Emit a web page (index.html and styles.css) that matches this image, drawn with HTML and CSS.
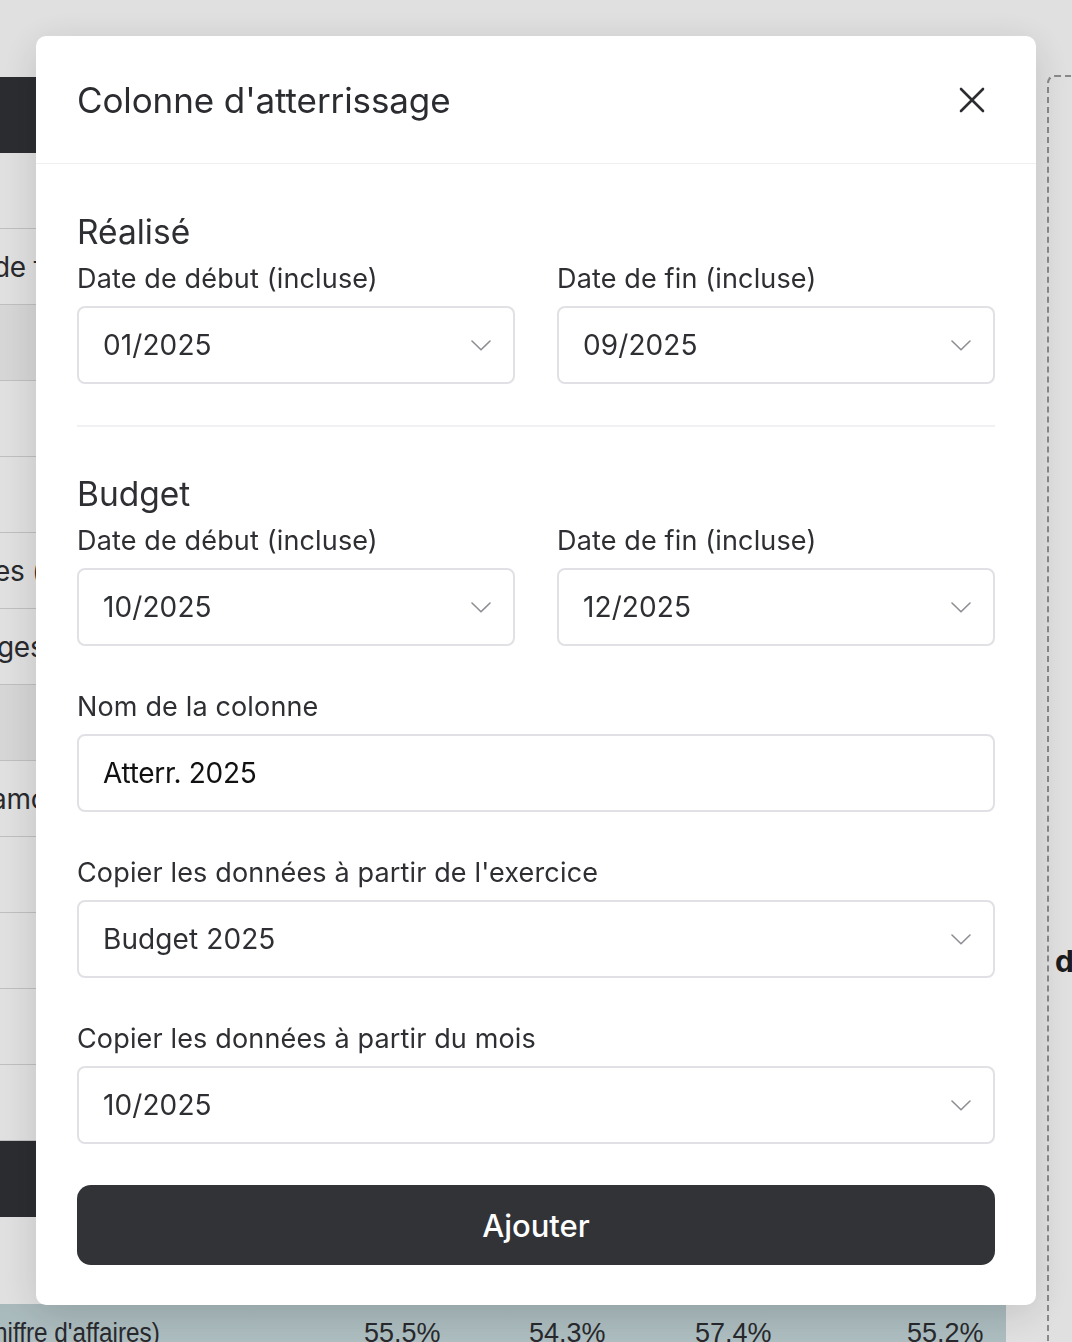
FILE: index.html
```html
<!DOCTYPE html>
<html lang="fr">
<head>
<meta charset="utf-8">
<title>Colonne d'atterrissage</title>
<link rel="stylesheet" href="styles.css">
</head>
<body>
<div class="app">
  <div class="table">
    <div class="row row-dark"></div>
    <div class="row"></div>
    <div class="row"><span class="cell-label shift-7">de frais</span></div>
    <div class="row row-shade"></div>
    <div class="row"></div>
    <div class="row"></div>
    <div class="row"><span class="cell-label shift-6">es (hors</span></div>
    <div class="row"><span class="cell-label">ges</span></div>
    <div class="row row-shade"></div>
    <div class="row"><span class="cell-label shift-9">amort</span></div>
    <div class="row"></div>
    <div class="row"></div>
    <div class="row"></div>
    <div class="row"></div>
    <div class="row row-dark"></div>
    <div class="row row-blank"></div>
    <div class="row row-foot">
      <span class="foot-label">hiffre d'affaires)</span>
      <span class="foot-val v1">55.5%</span>
      <span class="foot-val v2">54.3%</span>
      <span class="foot-val v3">57.4%</span>
      <span class="foot-val v4">55.2%</span>
    </div>
  </div>
  <div class="panel"><span class="panel-title">dépenses</span></div>
</div>

<div class="overlay">
  <div class="modal">
    <header class="modal-header">
      <h2 class="modal-title">Colonne d'atterrissage</h2>
      <button class="close" aria-label="Fermer">
        <svg width="26" height="26" viewBox="0 0 26 26"><path d="M2 2 L24 24 M24 2 L2 24" stroke="#2c2d31" stroke-width="2.6" stroke-linecap="round"/></svg>
      </button>
    </header>
    <div class="modal-body">
      <section class="section">
        <h3 class="section-title">Réalisé</h3>
        <div class="grid2">
          <div class="field">
            <label class="label">Date de début (incluse)</label>
            <div class="select"><span class="value">01/2025</span><svg class="chev" width="20" height="11" viewBox="0 0 20 11"><path d="M1 1 L10 9.8 L19 1" fill="none" stroke="#8d8e93" stroke-width="1.6" stroke-linecap="round" stroke-linejoin="round"/></svg></div>
          </div>
          <div class="field">
            <label class="label">Date de fin (incluse)</label>
            <div class="select"><span class="value">09/2025</span><svg class="chev" width="20" height="11" viewBox="0 0 20 11"><path d="M1 1 L10 9.8 L19 1" fill="none" stroke="#8d8e93" stroke-width="1.6" stroke-linecap="round" stroke-linejoin="round"/></svg></div>
          </div>
        </div>
      </section>
      <hr class="divider">
      <section class="section">
        <h3 class="section-title">Budget</h3>
        <div class="grid2">
          <div class="field">
            <label class="label">Date de début (incluse)</label>
            <div class="select"><span class="value">10/2025</span><svg class="chev" width="20" height="11" viewBox="0 0 20 11"><path d="M1 1 L10 9.8 L19 1" fill="none" stroke="#8d8e93" stroke-width="1.6" stroke-linecap="round" stroke-linejoin="round"/></svg></div>
          </div>
          <div class="field">
            <label class="label">Date de fin (incluse)</label>
            <div class="select"><span class="value">12/2025</span><svg class="chev" width="20" height="11" viewBox="0 0 20 11"><path d="M1 1 L10 9.8 L19 1" fill="none" stroke="#8d8e93" stroke-width="1.6" stroke-linecap="round" stroke-linejoin="round"/></svg></div>
          </div>
        </div>
      </section>
      <div class="field field-spaced">
        <label class="label">Nom de la colonne</label>
        <div class="select"><span class="value value-strong">Atterr. 2025</span></div>
      </div>
      <div class="field field-spaced">
        <label class="label">Copier les données à partir de l'exercice</label>
        <div class="select"><span class="value">Budget 2025</span><svg class="chev" width="20" height="11" viewBox="0 0 20 11"><path d="M1 1 L10 9.8 L19 1" fill="none" stroke="#8d8e93" stroke-width="1.6" stroke-linecap="round" stroke-linejoin="round"/></svg></div>
      </div>
      <div class="field field-spaced">
        <label class="label">Copier les données à partir du mois</label>
        <div class="select"><span class="value">10/2025</span><svg class="chev" width="20" height="11" viewBox="0 0 20 11"><path d="M1 1 L10 9.8 L19 1" fill="none" stroke="#8d8e93" stroke-width="1.6" stroke-linecap="round" stroke-linejoin="round"/></svg></div>
      </div>
      <button class="submit">Ajouter</button>
    </div>
  </div>
</div>
</body>
</html>
```
FILE: styles.css
```css
html, body {
  margin: 0;
  padding: 0;
  height: 100%;
  overflow: hidden;
}
body {
  background: #ffffff;
  font-family: Inter, "Noto Sans", "Liberation Sans", sans-serif;
  color: #2e2f33;
}

/* ---------- background app ---------- */
.app {
  display: flex;
  height: 100vh;
  overflow: hidden;
}
.table {
  width: 1006px;
  flex: none;
  padding-top: 77px;
  display: flex;
  flex-direction: column;
}
.row {
  height: 76px;
  flex: none;
  box-sizing: border-box;
  border-bottom: 1px solid #dadadd;
  display: flex;
  align-items: center;
  overflow: hidden;
  white-space: nowrap;
}
.row-dark {
  background: #323337;
  border-bottom: none;
}
.row-shade {
  background: #f4f4f5;
}
.row-blank {
  height: 87px;
  border-bottom: none;
}
.row-foot {
  height: 60px;
  background: linear-gradient(#c0d3d6, #cadcdf);
  border-bottom: none;
  align-items: flex-start;
  padding-top: 14px;
  position: relative;
}
.cell-label {
  font-size: 28px;
  margin-left: -3px;
  color: #2e2f33;
  letter-spacing: -0.3px;
}
.shift-6 { margin-left: -6px; }
.shift-7 { margin-left: -7px; }
.shift-9 { margin-left: -9px; }
.foot-label,
.foot-val {
  font-family: "Liberation Sans", Arial, sans-serif;
  font-size: 27px;
  color: #2e2f33;
}
.foot-label {
  margin-left: -6px;
  transform: scaleX(0.9);
  transform-origin: left center;
}
.foot-val {
  position: absolute;
  top: 14px;
}
.v1 { left: 364px; }
.v2 { left: 529px; }
.v3 { left: 695px; }
.v4 { left: 907px; }

.panel {
  flex: 1;
  margin-left: 41px;
  margin-top: 75px;
  border-left: 2px dashed #9c9c9f;
  border-top: 2px dashed #9c9c9f;
  border-top-left-radius: 8px;
  padding-top: 866px;
  padding-left: 6px;
  overflow: hidden;
  white-space: nowrap;
}
.panel-title {
  font-size: 30px;
  font-weight: 700;
  color: #1f2023;
}

/* ---------- overlay ---------- */
.overlay {
  position: fixed;
  inset: 0;
  background: rgba(0, 0, 0, 0.12);
  display: flex;
  justify-content: center;
  align-items: flex-start;
  padding-top: 36px;
}
.modal {
  width: 1000px;
  background: #ffffff;
  border-radius: 10px;
  box-shadow: 0 8px 40px rgba(0, 0, 0, 0.14);
  overflow: hidden;
}
.modal-header {
  height: 127px;
  border-bottom: 1px solid #efeff1;
  display: flex;
  align-items: center;
  justify-content: space-between;
  padding: 0 51px 0 41px;
}
.modal-title {
  margin: 0;
  font-size: 35px;
  font-weight: 400;
  line-height: 44px;
  color: #2b2c30;
  letter-spacing: -0.1px;
}
.close {
  border: none;
  background: none;
  padding: 0;
  width: 26px;
  height: 26px;
  display: flex;
  cursor: pointer;
}

.modal-body {
  padding: 50px 41px 40px;
  display: flex;
  flex-direction: column;
}
.section-title {
  margin: 0 0 13px;
  font-size: 33.5px;
  font-weight: 400;
  line-height: 36px;
  color: #2e2f33;
}
.grid2 {
  display: grid;
  grid-template-columns: 1fr 1fr;
  column-gap: 42px;
}
.field {
  display: flex;
  flex-direction: column;
}
.field-spaced {
  margin-top: 45px;
}
.label {
  font-size: 27px;
  line-height: 32px;
  margin-bottom: 11px;
  color: #2e2f33;
  letter-spacing: 0.15px;
}
.select {
  height: 78px;
  box-sizing: border-box;
  border: 2px solid #e1e1e5;
  border-radius: 8px;
  display: flex;
  align-items: center;
  justify-content: space-between;
  padding: 0 22px 0 24px;
}
.value {
  font-size: 28px;
  color: #2e2f33;
  letter-spacing: 0.1px;
}
.value-strong {
  color: #111113;
  letter-spacing: -0.3px;
}
.chev {
  flex: none;
}
.divider {
  border: none;
  border-top: 2px solid #f1f1f3;
  margin: 41px 0 49px;
  height: 0;
}
.submit {
  margin-top: 41px;
  height: 80px;
  border: none;
  border-radius: 14px;
  background: #323337;
  color: #ffffff;
  font-family: Inter, "Noto Sans", sans-serif;
  font-size: 31px;
  font-weight: 500;
  cursor: pointer;
}
```
